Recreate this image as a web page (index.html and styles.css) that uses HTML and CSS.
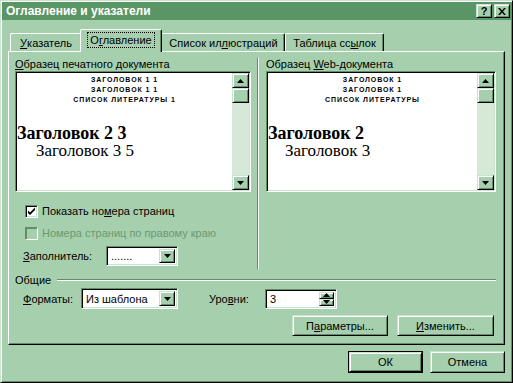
FILE: index.html
```html
<!DOCTYPE html>
<html lang="ru">
<head>
    <meta charset="UTF-8">
    <title>Оглавление и указатели</title>
    <link rel="stylesheet" href="styles.css">
</head>
<body>
    <div class="window">
        <!-- Заголовок окна -->
        <div class="titlebar">
            <span class="title">Оглавление и указатели</span>
            <span class="cap-btn help">?</span>
            <span class="cap-btn close">
                <svg width="8" height="7" viewBox="0 0 8 7"><path d="M0 0h2l2 2.5L6 0h2L5 3.5 8 7H6L4 4.5 2 7H0l3-3.5z" fill="#000"/></svg>
            </span>
        </div>

        <!-- Вкладки -->
        <div class="tabs">
            <div class="tab tab-1"><u>У</u>казатель</div>
            <div class="tab tab-2 active"><span class="focus">О<u>г</u>лавление</span></div>
            <div class="tab tab-3">Список ил<u>л</u>юстраций</div>
            <div class="tab tab-4">Таблица сс<u>ы</u>лок</div>
        </div>

        <div class="panel">
            <div class="previews">
                <!-- Образец печатного документа -->
                <div class="col col-print">
                    <div class="label"><u>О</u>бразец печатного документа</div>
                    <div class="preview">
                        <div class="sheet">
                            <div class="toc1">ЗАГОЛОВОК 1 1</div>
                            <div class="toc1">ЗАГОЛОВОК 1 1</div>
                            <div class="toc1">СПИСОК ЛИТЕРАТУРЫ 1</div>
                            <div class="toc2">Заголовок 2 3</div>
                            <div class="toc3">Заголовок 3 5</div>
                        </div>
                        <div class="vscroll">
                            <div class="raised sb-btn">
                                <svg width="7" height="4" viewBox="0 0 7 4"><path d="M3.5 0L7 4H0z" fill="#000"/></svg>
                            </div>
                            <div class="raised sb-btn"></div>
                            <div class="sb-track"></div>
                            <div class="raised sb-btn">
                                <svg width="7" height="4" viewBox="0 0 7 4"><path d="M0 0h7L3.5 4z" fill="#000"/></svg>
                            </div>
                        </div>
                    </div>

                    <div class="check-row">
                        <span class="checkbox">
                            <svg width="9" height="9" viewBox="0 0 9 9"><path d="M1 3.5l2 2L8 0.5v2.5L3 8 1 6z" fill="#000"/></svg>
                        </span>
                        <span>Показать но<u>м</u>ера страниц</span>
                    </div>
                    <div class="check-row disabled">
                        <span class="checkbox"></span>
                        <span>Номера страниц по правому краю</span>
                    </div>
                    <div class="field-row">
                        <span class="field-label fill-label"><u>З</u>аполнитель:</span>
                        <div class="combo fill-combo">
                            <span class="combo-text">.......</span>
                            <span class="raised combo-btn">
                                <svg width="7" height="4" viewBox="0 0 7 4"><path d="M0 0h7L3.5 4z" fill="#000"/></svg>
                            </span>
                        </div>
                    </div>
                </div>

                <div class="sep"></div>

                <!-- Образец Web-документа -->
                <div class="col col-web">
                    <div class="label">Образец <u>W</u>eb-документа</div>
                    <div class="preview">
                        <div class="sheet">
                            <div class="toc1">ЗАГОЛОВОК 1</div>
                            <div class="toc1">ЗАГОЛОВОК 1</div>
                            <div class="toc1">СПИСОК ЛИТЕРАТУРЫ</div>
                            <div class="toc2">Заголовок 2</div>
                            <div class="toc3 web">Заголовок 3</div>
                        </div>
                        <div class="vscroll">
                            <div class="raised sb-btn">
                                <svg width="7" height="4" viewBox="0 0 7 4"><path d="M3.5 0L7 4H0z" fill="#000"/></svg>
                            </div>
                            <div class="raised sb-btn"></div>
                            <div class="sb-track"></div>
                            <div class="raised sb-btn">
                                <svg width="7" height="4" viewBox="0 0 7 4"><path d="M0 0h7L3.5 4z" fill="#000"/></svg>
                            </div>
                        </div>
                    </div>
                </div>
            </div>

            <!-- Общие -->
            <div class="group-title">
                <span>Общие</span>
                <span class="etched"></span>
            </div>
            <div class="field-row formats-row">
                <span class="field-label formats-label"><u>Ф</u>орматы:</span>
                <div class="combo formats-combo">
                    <span class="combo-text">Из шаблона</span>
                    <span class="raised combo-btn">
                        <svg width="7" height="4" viewBox="0 0 7 4"><path d="M0 0h7L3.5 4z" fill="#000"/></svg>
                    </span>
                </div>
                <span class="field-label levels-label">Уро<u>в</u>ни:</span>
                <div class="combo spin">
                    <span class="combo-text">3</span>
                    <span class="spin-btns">
                        <span class="raised spin-btn">
                            <svg width="7" height="4" viewBox="0 0 7 4"><path d="M3.5 0L7 4H0z" fill="#000"/></svg>
                        </span>
                        <span class="raised spin-btn">
                            <svg width="7" height="4" viewBox="0 0 7 4"><path d="M0 0h7L3.5 4z" fill="#000"/></svg>
                        </span>
                    </span>
                </div>
            </div>
            <div class="actions">
                <button class="raised btn btn-params">П<u>а</u>раметры...</button>
                <button class="raised btn btn-edit"><u>И</u>зменить...</button>
            </div>
        </div>

        <!-- Кнопки диалога -->
        <div class="footer">
            <span class="default-frame"><button class="raised btn btn-ok">ОК</button></span>
            <button class="raised btn btn-cancel">Отмена</button>
        </div>
    </div>
</body>
</html>
```

FILE: styles.css
```css
/* Базовые стили */
body {
    margin: 0;
    padding: 0;
    background: #a6cfae;
    font-family: "Liberation Sans", Arial, sans-serif;
    font-size: 11px;
    color: #000;
}

u {
    text-decoration: underline;
    text-underline-offset: 1px;
}

/* Окно */
.window {
    box-sizing: border-box;
    width: 513px;
    height: 383px;
    background: #a6cfae;
    border: 1px solid;
    border-color: #c9e3ce #000 #000 #c9e3ce;
    padding: 1px;
    box-shadow: inset 1px 1px #fff, inset -1px -1px #5f8e67;
}

/* Заголовок */
.titlebar {
    display: flex;
    align-items: center;
    height: 18px;
    padding-left: 4px;
    background: #5a9565;
}

.title {
    flex: 1;
    color: #fff;
    font-weight: bold;
    font-size: 12px;
}

.cap-btn {
    box-sizing: border-box;
    display: flex;
    align-items: center;
    justify-content: center;
    width: 16px;
    height: 14px;
    margin-right: 2px;
    background: #a6cfae;
    border: 1px solid;
    border-color: #c9e3ce #000 #000 #c9e3ce;
    box-shadow: inset 1px 1px #fff, inset -1px -1px #5f8e67;
    font-weight: bold;
    font-size: 11px;
}

.cap-btn.close {
    margin-right: 1px;
}

/* Общий вид объёмных элементов */
.raised {
    box-sizing: border-box;
    background: #a6cfae;
    border: 1px solid;
    border-color: #c9e3ce #000 #000 #c9e3ce;
    box-shadow: inset 1px 1px #fff, inset -1px -1px #5f8e67;
}

/* Вкладки */
.tabs {
    display: flex;
    align-items: flex-end;
    height: 22px;
    margin-top: 9px;
    margin-left: 8px;
    position: relative;
    z-index: 2;
}

.tab {
    box-sizing: border-box;
    height: 18px;
    display: flex;
    align-items: center;
    justify-content: center;
    border-top: 1px solid #fff;
    border-left: 1px solid #fff;
    border-right: 1px solid #000;
    border-top-left-radius: 2px;
    border-top-right-radius: 2px;
    box-shadow: inset -1px 0 #5f8e67;
    white-space: nowrap;
}

.tab-1 { width: 72px; }
.tab-3 { width: 125px; padding-left: 2px; }
.tab-4 { width: 99px; }

.tab.active {
    width: 82px;
    height: 23px;
    margin: 0 -2px -1px;
    padding-bottom: 2px;
    background: #a6cfae;
    position: relative;
    z-index: 3;
}

.focus {
    padding: 1px 2px;
    outline: 1px dotted #000;
}

/* Панель вкладки */
.panel {
    margin: 0 6px;
    padding: 6px 8px 8px 6px;
    border-top: 1px solid #fff;
    border-left: 1px solid #fff;
    border-right: 1px solid #000;
    border-bottom: 1px solid #000;
    box-shadow: inset -1px -1px #5f8e67;
}

.previews {
    display: flex;
}

.col-print {
    width: 236px;
    padding-bottom: 3px;
}

.col-web {
    width: 230px;
}

.sep {
    width: 0;
    margin: 0 7px 0 6px;
    border-left: 1px solid #5f8e67;
    border-right: 1px solid #fff;
}

.label {
    height: 13px;
    line-height: 13px;
}

/* Образец */
.preview {
    box-sizing: border-box;
    display: flex;
    height: 121px;
    border: 1px solid;
    border-color: #5f8e67 #fff #fff #5f8e67;
    box-shadow: inset 1px 1px #000, inset -1px -1px #c9e3ce;
    padding: 1px;
}

.sheet {
    flex: 1;
    background: #fff;
    padding-top: 2px;
    overflow: hidden;
}

.toc1 {
    height: 10px;
    line-height: 10px;
    text-align: center;
    font-size: 7px;
    font-weight: bold;
    letter-spacing: 0.9px;
}

.toc2 {
    margin-top: 19px;
    line-height: 18px;
    font-family: "Liberation Serif", "Times New Roman", serif;
    font-size: 18px;
    font-weight: bold;
    white-space: nowrap;
}

.toc3 {
    padding-left: 19px;
    line-height: 18px;
    font-family: "Liberation Serif", "Times New Roman", serif;
    font-size: 17px;
    white-space: nowrap;
}

.toc3.web {
    padding-left: 17px;
}

.vscroll {
    display: flex;
    flex-direction: column;
    width: 17px;
}

.sb-btn {
    height: 15px;
    display: flex;
    align-items: center;
    justify-content: center;
}

.sb-track {
    flex: 1;
    background: #d6e9d9;
}

/* Флажки */
.check-row {
    display: flex;
    align-items: center;
    height: 16px;
    margin-top: 11px;
    padding-left: 10px;
    gap: 4px;
}

.check-row.disabled {
    margin-top: 6px;
    color: #6a9a72;
}

.checkbox {
    box-sizing: border-box;
    display: flex;
    align-items: center;
    justify-content: center;
    width: 13px;
    height: 13px;
    background: #fff;
    border: 1px solid;
    border-color: #5f8e67 #fff #fff #5f8e67;
    box-shadow: inset 1px 1px #000, inset -1px -1px #c9e3ce;
}

.check-row.disabled .checkbox {
    background: #a6cfae;
    box-shadow: inset 1px 1px #5f8e67;
}

/* Поля */
.field-row {
    display: flex;
    align-items: center;
    margin-top: 5px;
    padding-left: 8px;
}

.fill-label { width: 83px; }
.formats-label { width: 58px; }
.levels-label { width: 56px; margin-left: 31px; }

.combo {
    box-sizing: border-box;
    display: flex;
    align-items: stretch;
    height: 20px;
    background: #fff;
    border: 1px solid;
    border-color: #5f8e67 #fff #fff #5f8e67;
    box-shadow: inset 1px 1px #000, inset -1px -1px #c9e3ce;
    padding: 2px;
}

.fill-combo { width: 72px; }
.formats-combo { width: 97px; height: 21px; }
.spin { width: 72px; }

.combo-text {
    flex: 1;
    display: flex;
    align-items: center;
    padding-left: 2px;
}

.combo-btn {
    width: 16px;
    display: flex;
    align-items: center;
    justify-content: center;
}

.spin-btns {
    display: flex;
    flex-direction: column;
    width: 15px;
}

.spin-btn {
    flex: 1;
    display: flex;
    align-items: center;
    justify-content: center;
}

/* Группа «Общие» */
.group-title {
    display: flex;
    align-items: center;
    height: 13px;
    margin-top: 4px;
}

.etched {
    flex: 1;
    margin-left: 6px;
    border-top: 1px solid #5f8e67;
    border-bottom: 1px solid #fff;
}

.formats-row {
    margin-top: 2px;
}

/* Кнопки */
.btn {
    height: 21px;
    padding: 0;
    font-family: "Liberation Sans", Arial, sans-serif;
    font-size: 11px;
    color: #000;
}

.actions {
    display: flex;
    justify-content: flex-end;
    gap: 9px;
    margin-top: 6px;
    padding-right: 2px;
}

.btn-params { width: 96px; }
.btn-edit { width: 97px; }

.footer {
    display: flex;
    justify-content: flex-end;
    align-items: center;
    gap: 7px;
    margin-top: 6px;
    padding-right: 6px;
}

.default-frame {
    display: flex;
    border: 1px solid #000;
}

.btn-ok {
    width: 73px;
    height: 20px;
}

.btn-cancel {
    width: 75px;
    height: 22px;
}
```
